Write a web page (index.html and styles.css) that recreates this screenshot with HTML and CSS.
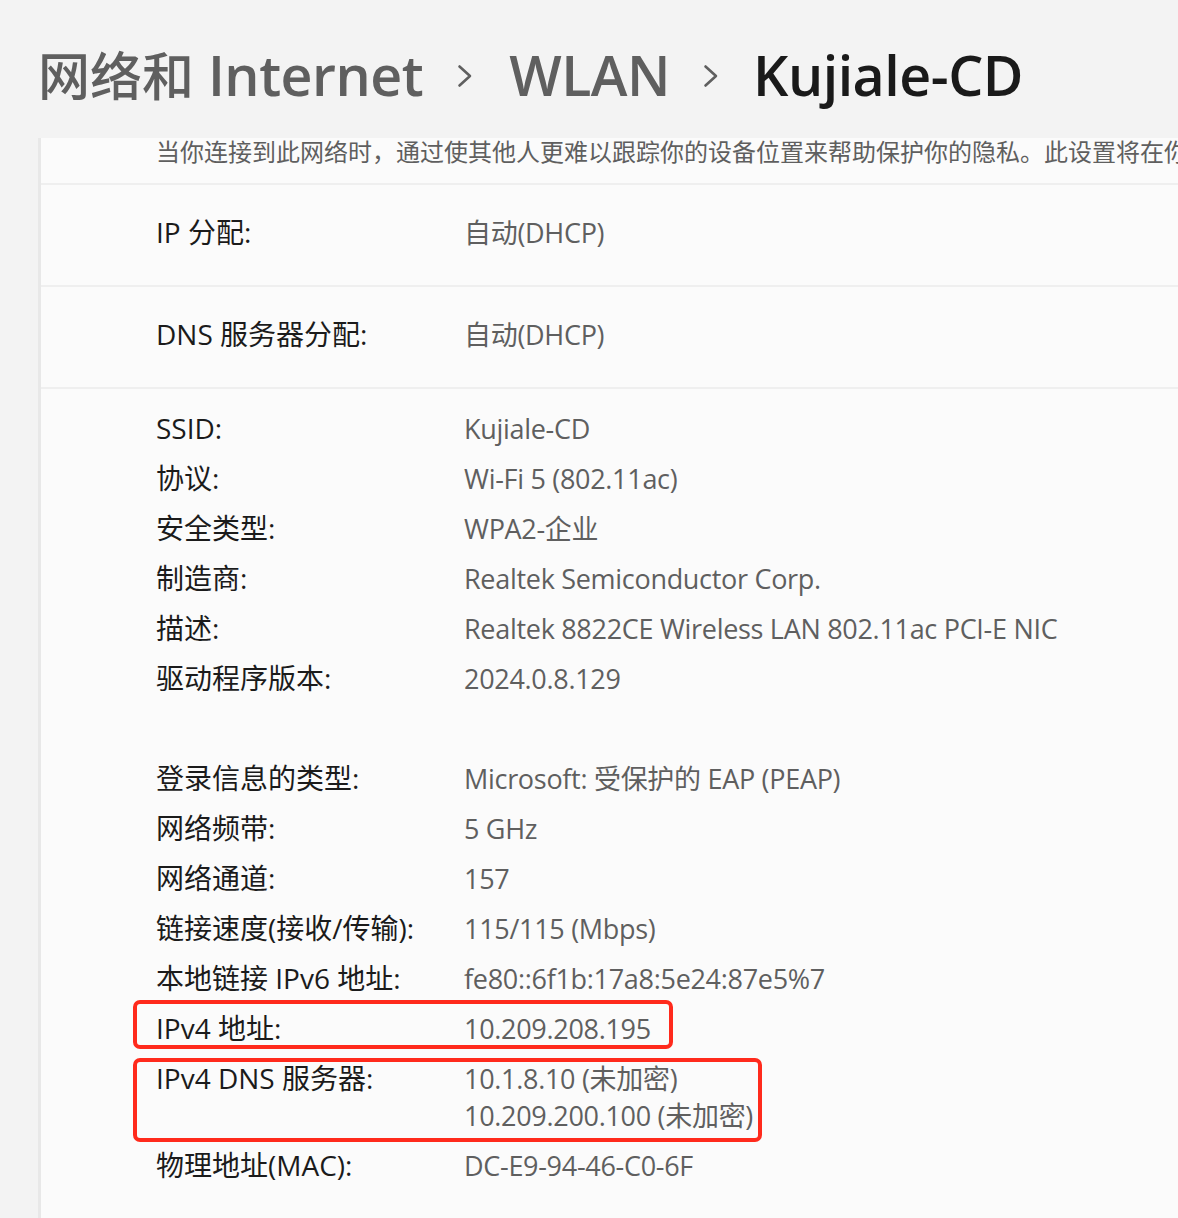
FILE: index.html
```html
<!DOCTYPE html>
<html lang="zh-CN">
<head>
<meta charset="utf-8">
<title>WLAN 属性</title>
<link rel="stylesheet" href="styles.css">
</head>
<body>
<header class="crumbs">
  <span class="crumb"><span class="cjk">网络和</span> Internet</span>
  <svg class="chev" viewBox="0 0 16 24" width="16" height="24"><path d="M2.5 2.5 L13 12 L2.5 21.5" fill="none" stroke="#5f5f5f" stroke-width="2.6" stroke-linecap="round" stroke-linejoin="round"/></svg>
  <span class="crumb">WLAN</span>
  <svg class="chev chev-last" viewBox="0 0 16 24" width="16" height="24"><path d="M2.5 2.5 L13 12 L2.5 21.5" fill="none" stroke="#5f5f5f" stroke-width="2.6" stroke-linecap="round" stroke-linejoin="round"/></svg>
  <span class="crumb current">Kujiale-CD</span>
</header>
<main class="card">
  <div class="note-row"><span class="note">当你连接到此网络时，通过使其他人更难以跟踪你的设备位置来帮助保护你的隐私。此设置将在你下次连接到此网络时生效。</span></div>
  <div class="setting-row">
    <span class="label">IP 分配:</span><span class="value">自动(DHCP)</span>
  </div>
  <div class="setting-row">
    <span class="label">DNS 服务器分配:</span><span class="value">自动(DHCP)</span>
  </div>
  <div class="props">
    <div class="prop"><span class="label">SSID:</span><span class="value">Kujiale-CD</span></div>
    <div class="prop"><span class="label">协议:</span><span class="value">Wi-Fi 5 (802.11ac)</span></div>
    <div class="prop"><span class="label">安全类型:</span><span class="value">WPA2-企业</span></div>
    <div class="prop"><span class="label">制造商:</span><span class="value">Realtek Semiconductor Corp.</span></div>
    <div class="prop"><span class="label">描述:</span><span class="value">Realtek 8822CE Wireless LAN 802.11ac PCI-E NIC</span></div>
    <div class="prop"><span class="label">驱动程序版本:</span><span class="value">2024.0.8.129</span></div>
    <div class="prop spacer"></div>
    <div class="prop"><span class="label">登录信息的类型:</span><span class="value">Microsoft: 受保护的 EAP (PEAP)</span></div>
    <div class="prop"><span class="label">网络频带:</span><span class="value">5 GHz</span></div>
    <div class="prop"><span class="label">网络通道:</span><span class="value">157</span></div>
    <div class="prop"><span class="label">链接速度(接收/传输):</span><span class="value">115/115 (Mbps)</span></div>
    <div class="prop"><span class="label">本地链接 IPv6 地址:</span><span class="value">fe80::6f1b:17a8:5e24:87e5%7</span></div>
    <div class="prop"><span class="label">IPv4 地址:</span><span class="value">10.209.208.195</span><span class="mark mark-ip"></span></div>
    <div class="prop"><span class="label">IPv4 DNS 服务器:</span><span class="value">10.1.8.10 (未加密)<br>10.209.200.100 (未加密)</span><span class="mark mark-dns"></span></div>
    <div class="prop"><span class="label">物理地址(MAC):</span><span class="value">DC-E9-94-46-C0-6F</span></div>
  </div>
</main>
</body>
</html>
```

FILE: styles.css
```css
html, body {
  margin: 0;
  padding: 0;
  background: #f3f3f3;
  overflow: hidden;
}
body {
  width: 1178px;
  height: 1218px;
  font-family: "Open Sans", "Noto Sans CJK SC", sans-serif;
  color: #1b1b1b;
}
.crumbs {
  height: 138px;
  box-sizing: border-box;
  padding: 40px 0 0 38px;
  display: flex;
  align-items: flex-start;
  line-height: 70px;
  white-space: nowrap;
}
.crumb {
  font-size: 55.5px;
  font-weight: 600;
  color: #5f5f5f;
  letter-spacing: -0.5px;
}
.crumb .cjk {
  font-size: 52px;
  font-weight: 500;
  letter-spacing: 0;
}
.crumb.current {
  color: #1a1a1a;
}
.chev {
  margin: 24px 36px 0 34px;
  flex: none;
}
.chev.chev-last {
  margin: 24px 34px 0 33px;
}
.card {
  margin-left: 38px;
  border-left: 3px solid #e8e8e8;
  background: #fbfbfb;
  height: 1080px;
  overflow: hidden;
}
.note-row {
  height: 47px;
  border-bottom: 2px solid #efefef;
  padding-left: 115px;
  white-space: nowrap;
  overflow: hidden;
  box-sizing: border-box;
}
.note {
  font-size: 24px;
  line-height: 30px;
  color: #5f5f5f;
  display: block;
  margin-top: -1px;
}
.setting-row {
  height: 102px;
  box-sizing: border-box;
  border-bottom: 2px solid #efefef;
  padding: 0 0 8px 115px;
  display: flex;
  align-items: center;
}
.label {
  width: 308px;
  flex: none;
  font-size: 28px;
}
.value {
  color: #5f5f5f;
  font-size: 27px;
  letter-spacing: -0.3px;
}
.props {
  padding: 21px 0 0 115px;
  display: flex;
  flex-direction: column;
  gap: 13px;
  line-height: 37px;
}
.prop {
  display: flex;
  position: relative;
  min-height: 37px;
}
.mark {
  position: absolute;
  border: 4px solid #ff2a1c;
  border-radius: 7px;
  box-sizing: border-box;
  pointer-events: none;
}
.mark-ip {
  left: -23px;
  top: -10px;
  width: 540px;
  height: 49px;
}
.mark-dns {
  left: -23px;
  top: -2px;
  width: 629px;
  height: 84px;
}
```
